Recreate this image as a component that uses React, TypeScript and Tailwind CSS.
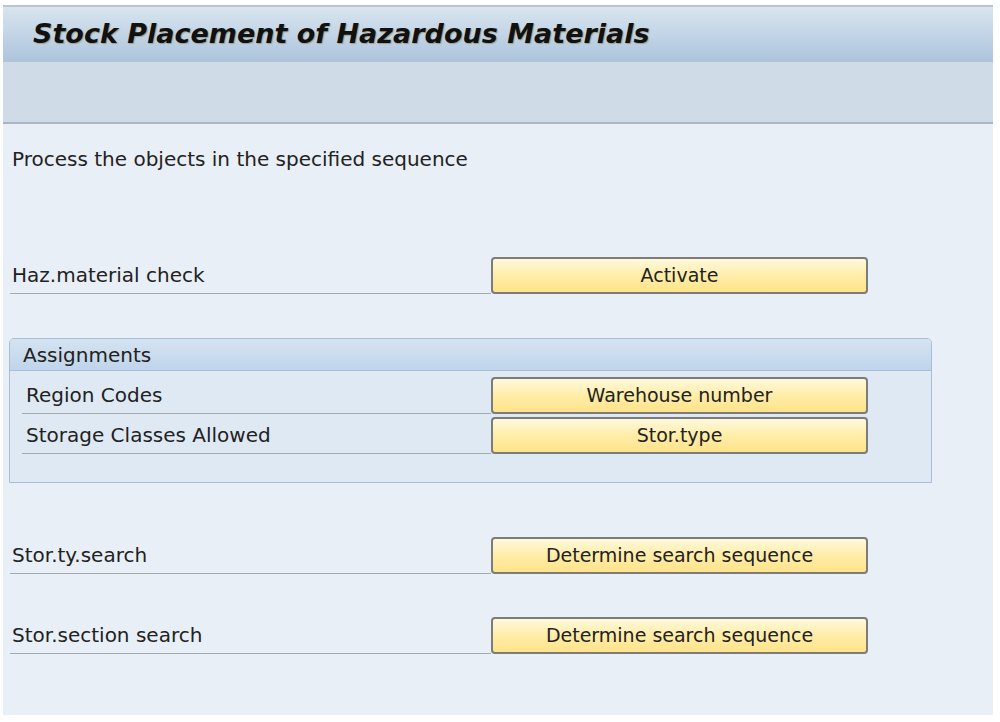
import React from 'react'

const font = { fontFamily: '"DejaVu Sans", Verdana, sans-serif' }

function SapButton({ label }: { label: string }) {
    return (
        <button
            type="button"
            className="w-[377px] h-[37px] shrink-0 rounded-[4px] border-2 border-[#7c7c7c] bg-gradient-to-b from-[#fff9dc] via-[#ffeda8] to-[#ffe38a] text-[19px] text-[#222] leading-none"
        >
            {label}
        </button>
    )
}

function Row({ label, button, inset = false }: { label: string; button: string; inset?: boolean }) {
    return (
        <div className="flex items-stretch h-[37px]">
            <div className={`flex-1 flex items-center border-b border-[#a4a9ae] ${inset ? 'pl-[4px]' : 'pl-[2px]'}`}>
                <span className="text-[20px] text-[#222]">{label}</span>
            </div>
            <SapButton label={button} />
        </div>
    )
}

export default function App() {
    return (
        <div className="min-h-[722px] bg-white pt-[5px] pl-[3px] pr-[7px]" style={font}>
            <div className="w-[990px] h-[710px] flex flex-col bg-[#e9eff6]">
                {/* Title bar */}
                <div className="h-[57px] border-t-2 border-[#b9c6d2] bg-gradient-to-b from-[#d9e5f0] to-[#acc4dc] flex items-center pl-[30px]">
                    <h1
                        className="text-[27px] font-bold italic text-[#111]"
                        style={{ textShadow: '1px 1px 1px rgba(120,100,40,0.45)' }}
                    >
                        Stock Placement of Hazardous Materials
                    </h1>
                </div>

                {/* Toolbar */}
                <div className="h-[62px] bg-[#cfdce8] border-b-2 border-[#a9b7c5]" />

                {/* Content */}
                <div className="flex flex-col pl-[7px] w-[865px]">
                    <p className="mt-[24px] h-[22px] text-[20px] leading-[22px] text-[#222] pl-[2px]">
                        Process the objects in the specified sequence
                    </p>

                    <div className="mt-[87px]">
                        <Row label="Haz.material check" button="Activate" />
                    </div>

                    {/* Assignments group */}
                    <div className="mt-[44px] -ml-[1px] w-[923px] h-[145px] flex flex-col rounded-t-[5px] border border-[#a6bfd7] bg-[#dfe9f4]">
                        <div className="h-[32px] flex items-center pl-[13px] rounded-t-[4px] border-b border-[#a6bfd7] bg-gradient-to-b from-[#d5e3f1] to-[#bfd5eb]">
                            <span className="text-[20px] text-[#222]">Assignments</span>
                        </div>
                        <div className="flex flex-col gap-[3px] pl-[12px] pt-[6px] w-[858px]">
                            <Row label="Region Codes" button="Warehouse number" inset />
                            <Row label="Storage Classes Allowed" button="Stor.type" inset />
                        </div>
                    </div>

                    <div className="mt-[54px]">
                        <Row label="Stor.ty.search" button="Determine search sequence" />
                    </div>
                    <div className="mt-[43px]">
                        <Row label="Stor.section search" button="Determine search sequence" />
                    </div>
                </div>
            </div>
        </div>
    )
}
